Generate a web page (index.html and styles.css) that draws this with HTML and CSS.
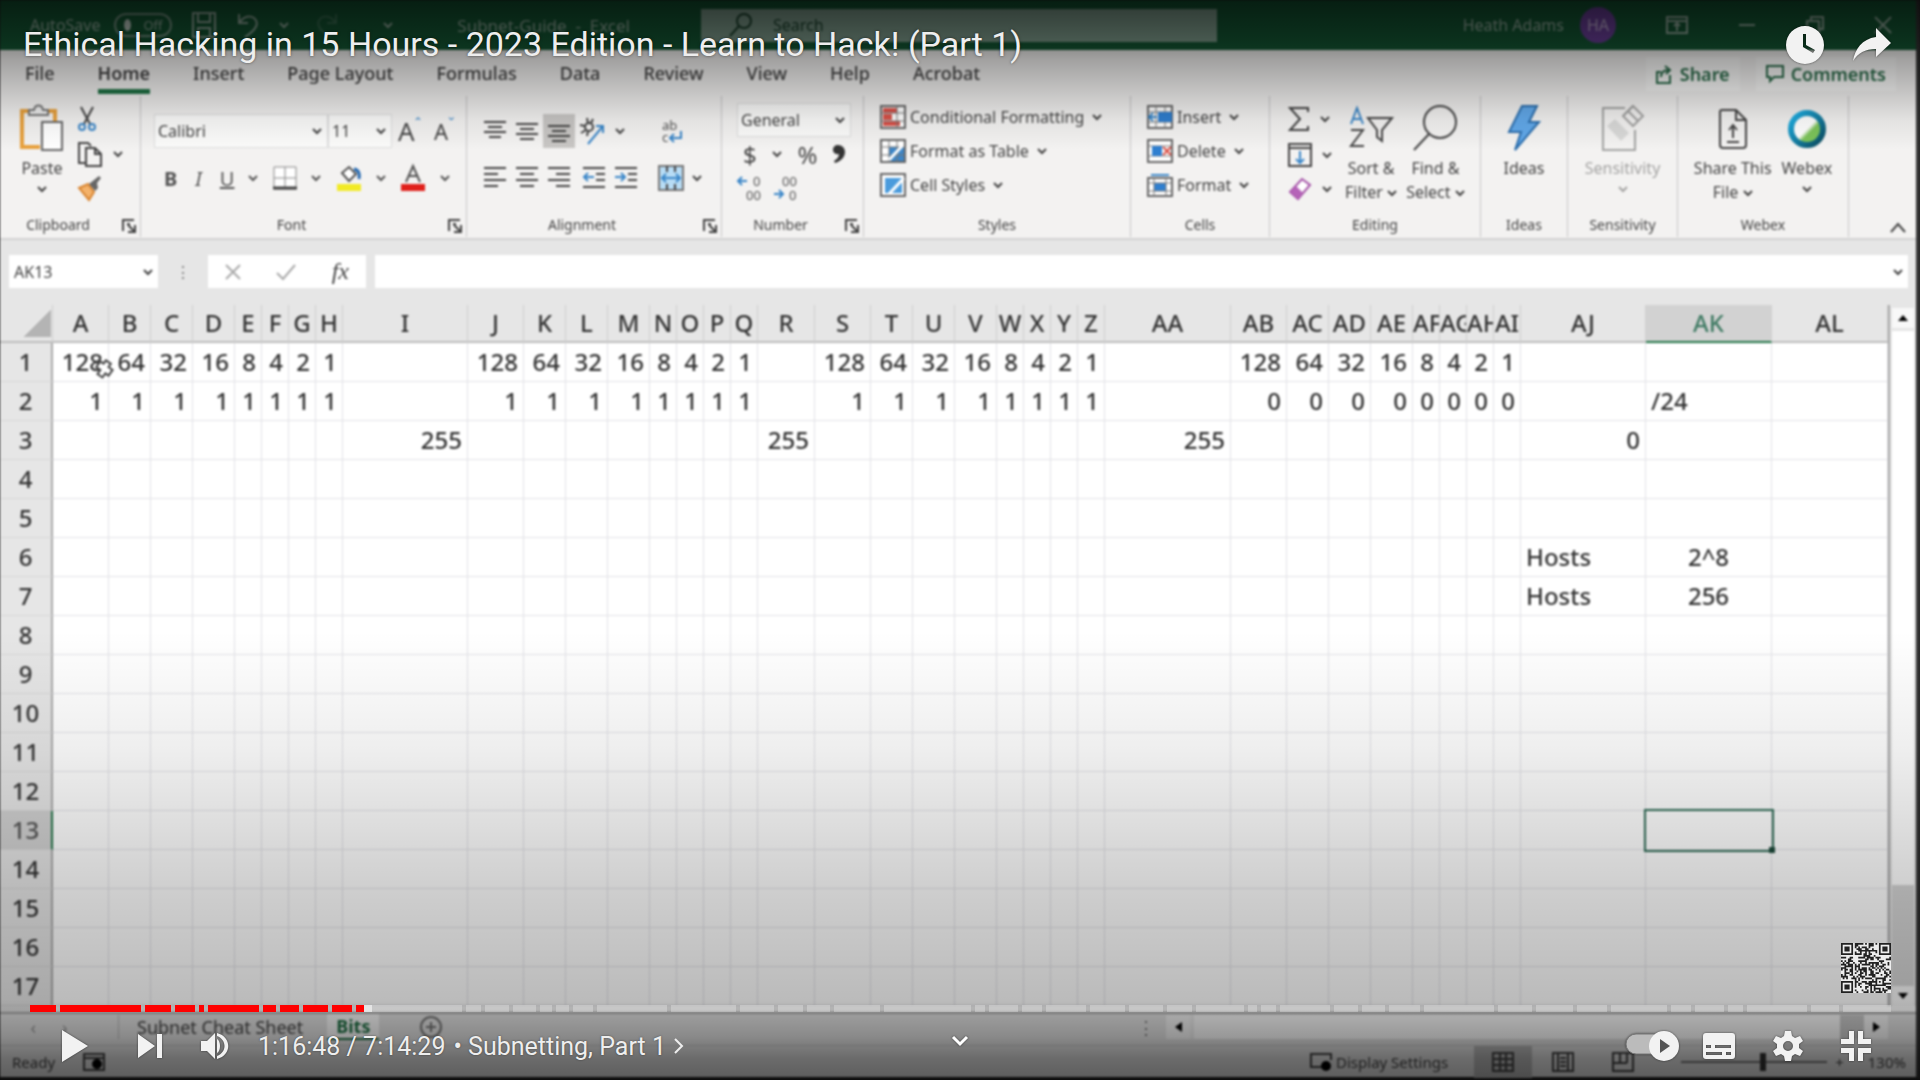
FILE: index.html
```html
<!DOCTYPE html>
<html lang="en">
<head>
<meta charset="utf-8">
<title>Ethical Hacking in 15 Hours - 2023 Edition - Learn to Hack! (Part 1)</title>
<link rel="stylesheet" href="styles.css">
</head>
<body>
<svg class="defs" aria-hidden="true">
  <symbol id="caret" viewBox="0 0 10 10"><path d="M1 3L5 7L9 3" fill="none" stroke="currentColor" stroke-width="2"/></symbol>
  <symbol id="launch" viewBox="0 0 14 14"><path d="M1 12V1H12M5 5H8M6 6L12 12M13 6V13H6" fill="none" stroke="currentColor" stroke-width="2"/></symbol>
</svg>
<main class="player">
  <div class="screen">
    <header class="titlebar">
      <div class="tb-left">
        <span>AutoSave</span><span class="switch"><i></i>Off</span>
        <svg width="26" height="28" viewBox="0 0 26 28"><path d="M2 2H24V26H2ZM7 2V11H19V2M7 26V17H19V26" class="ln"/></svg>
        <svg width="24" height="26" viewBox="0 0 24 26"><path d="M3 2V11H12M3 11C8 4 14 3 18 6C24 11 20 18 9 25" class="ln"/></svg>
        <svg class="c" ><use href="#caret"/></svg>
        <svg class="faint" width="24" height="26" viewBox="0 0 24 26"><path d="M21 2V11H12M21 11C16 4 10 3 6 6C0 11 4 18 15 25" class="ln"/></svg>
        <svg class="c last"><use href="#caret"/></svg>
        <span class="doc">Subnet-Guide&nbsp; -&nbsp; Excel</span>
      </div>
      <label class="search"><svg width="24" height="26" viewBox="0 0 24 26"><circle cx="15" cy="9" r="7" class="ln"/><path d="M10 14L1 24" class="ln"/></svg><input aria-label="Search" placeholder="Search"></label>
      <div class="tb-right">
        <span>Heath Adams</span><b class="avatar">HA</b>
        <svg width="22" height="18" viewBox="0 0 22 18"><path d="M1 1H21V17H1ZM1 5H21M11 15V8M8 10L11 7L14 10" class="ln"/></svg>
        <svg width="18" height="18" viewBox="0 0 18 18"><path d="M1 9H17" class="ln"/></svg>
        <svg width="18" height="18" viewBox="0 0 18 18"><path d="M1 5H13V17H1ZM5 5V1H17V13H13" class="ln"/></svg>
        <svg width="18" height="18" viewBox="0 0 18 18"><path d="M1 1L17 17M17 1L1 17" class="ln"/></svg>
      </div>
    </header>
    <nav class="tabs">
      <a href="#">File</a><a href="#" class="on">Home</a><a href="#">Insert</a><a href="#">Page Layout</a><a href="#">Formulas</a><a href="#">Data</a><a href="#">Review</a><a href="#">View</a><a href="#">Help</a><a href="#">Acrobat</a>
      <span class="tab-actions">
        <button><svg width="17" height="20" viewBox="0 0 17 20"><path d="M5 8H1V19H14V11M5 13C5 8 8 6 13 6M9 2L14 6L10 10" class="ln"/></svg>Share</button>
        <button><svg width="18" height="18" viewBox="0 0 18 18"><path d="M1 1H17V12H8L4 16V12H1Z" class="ln"/></svg>Comments</button>
      </span>
    </nav>
    <section class="ribbon">
      <div class="group">
        <div class="body clip">
          <button class="big"><svg width="44" height="48" viewBox="0 0 44 48"><path d="M20 43H2V7H35V18" fill="none" stroke="#e8a13d" stroke-width="4"/><path d="M9 11V6H14C15 0 22 0 23 6H28V11Z" fill="#eee" stroke="#777" stroke-width="2"/><path d="M22 18H42V46H22Z" fill="#fff" stroke="#666" stroke-width="2"/></svg><span>Paste</span><svg class="c"><use href="#caret"/></svg></button>
          <div class="stack">
            <button><svg width="20" height="26" viewBox="0 0 20 26"><path d="M4 1L13 18M16 1L7 18" class="ln"/><circle cx="5" cy="21" r="3" class="bl"/><circle cx="15" cy="21" r="3" class="bl"/></svg></button>
            <button><svg width="26" height="26" viewBox="0 0 26 26"><path d="M9 22H2V2H11L14 5M9 7H18L24 13V25H9ZM18 7V13H24" class="ln"/></svg><svg class="c"><use href="#caret"/></svg></button>
            <button><svg width="26" height="26" viewBox="0 0 26 26"><path d="M2 13L11 9L17 17L12 25Z" fill="#f3b26b" stroke="#d98530" stroke-width="2"/><path d="M12 9L18 16L21 13L20 8L24 3L22 1L17 5Z" fill="#666"/></svg></button>
          </div>
        </div>
        <footer class="has-l">Clipboard<svg class="l"><use href="#launch"/></svg></footer>
      </div>
      <div class="group">
        <div class="body rows font">
          <div class="row"><button class="combo name">Calibri<svg class="c"><use href="#caret"/></svg></button><button class="combo size">11<svg class="c"><use href="#caret"/></svg></button><button class="glyph a1">A<sup>ˆ</sup></button><button class="glyph a2">A<sup>ˇ</sup></button></div>
          <div class="row biu"><button><b>B</b></button><button><i>I</i></button><button><u>U</u></button><svg class="c"><use href="#caret"/></svg>
            <button class="gap"><svg width="24" height="24" viewBox="0 0 24 24"><path d="M1 1H23V23H1ZM12 1V23M1 12H23" fill="#fff" stroke="#888"/><path d="M0 22H24" stroke="#444" stroke-width="3"/></svg></button><svg class="c"><use href="#caret"/></svg>
            <button class="gap"><svg width="26" height="28" viewBox="0 0 26 28"><path d="M6 9L13 3L20 10L13 17Z" fill="#fff" stroke="#555" stroke-width="2"/><path d="M18 5C23 6 24 10 23 15" fill="none" stroke="#2468b0" stroke-width="3"/><path d="M1 20H25V27H1Z" fill="#f2ea25"/></svg></button><svg class="c"><use href="#caret"/></svg>
            <button><svg width="26" height="28" viewBox="0 0 26 28"><path d="M6 18L13 2L20 18M9 12H17" class="ln"/><path d="M1 20H25V27H1Z" fill="#e0201b"/></svg></button><svg class="c"><use href="#caret"/></svg></div>
        </div>
        <footer class="has-l">Font<svg class="l"><use href="#launch"/></svg></footer>
      </div>
      <div class="group">
        <div class="body rows align">
          <div class="row"><button><svg width="24" height="24" viewBox="0 0 24 24"><path d="M1 3H23M5 8H19M1 13H23M6 18H18" class="ln"/></svg></button><button><svg width="24" height="24" viewBox="0 0 24 24"><path d="M1 5H23M5 10H19M1 15H23M5 20H19" class="ln"/></svg></button><button class="sel"><svg width="24" height="24" viewBox="0 0 24 24"><path d="M1 7H23M5 12H19M1 17H23M5 22H19" class="ln"/></svg></button><button><svg width="28" height="28" viewBox="0 0 28 28"><circle cx="10" cy="10" r="4" class="ln"/><path d="M1 8L6 9M8 1L9 6M14 2L12 6M2 16L7 13M9 14L8 19" class="ln"/><path d="M9 27L24 9M17 9H24V16" class="bl"/></svg></button><svg class="c"><use href="#caret"/></svg><button class="wrap"><svg width="22" height="26" viewBox="0 0 22 26"><text x="1" y="12">ab</text><text x="1" y="24">c</text><path d="M20 13V20H10M13 16L9 20L13 24" class="bl"/></svg></button></div>
          <div class="row"><button><svg width="24" height="24" viewBox="0 0 24 24"><path d="M1 2H23M1 8H15M1 14H23M1 20H15" class="ln"/></svg></button><button><svg width="24" height="24" viewBox="0 0 24 24"><path d="M1 2H23M5 8H19M1 14H23M5 20H19" class="ln"/></svg></button><button><svg width="24" height="24" viewBox="0 0 24 24"><path d="M1 2H23M9 8H23M1 14H23M9 20H23" class="ln"/></svg></button><button class="indent"><svg width="24" height="24" viewBox="0 0 24 24"><path d="M1 2H23M14 8H23M14 14H23M1 21H23" class="ln"/><path d="M12 11H2M6 7L2 11L6 15" class="bl"/></svg></button><button><svg width="24" height="24" viewBox="0 0 24 24"><path d="M1 2H23M14 8H23M14 14H23M1 21H23" class="ln"/><path d="M1 11H11M7 7L11 11L7 15" class="bl"/></svg></button><button class="merge"><svg width="26" height="26" viewBox="0 0 26 26"><path d="M1 1H25V25H1Z" fill="#b7dcf5" stroke="#777" stroke-width="2"/><path d="M5 13H21M8 9L4 13L8 17M18 9L22 13L18 17" class="bl"/><path d="M9 1V7M17 1V7M9 19V25M17 19V25" class="ln"/></svg></button><svg class="c"><use href="#caret"/></svg></div>
        </div>
        <footer class="has-l">Alignment<svg class="l"><use href="#launch"/></svg></footer>
      </div>
      <div class="group">
        <div class="body num">
          <button class="combo">General<svg class="c"><use href="#caret"/></svg></button>
          <div class="row"><button>$</button><svg class="c"><use href="#caret"/></svg><button>%</button><button aria-label="Comma style"><svg width="12" height="18" viewBox="0 0 12 18"><path d="M5 0C9 0 12 3 12 7C12 12 8 16 2 18L1 16C4 14 6 12 6 9C2 10 0 7 0 5C0 2 2 0 5 0Z" fill="#333"/></svg></button></div>
          <div class="row"><svg width="26" height="26" viewBox="0 0 26 26"><path d="M10 6H2M5 2L1 6L5 10" class="bl"/><text x="16" y="11">0</text><text x="9" y="25">00</text></svg><svg width="26" height="26" viewBox="0 0 26 26"><text x="9" y="11">00</text><path d="M1 19H9M6 15L10 19L6 23" class="bl"/><text x="16" y="25">0</text></svg></div>
        </div>
        <footer class="has-l">Number<svg class="l"><use href="#launch"/></svg></footer>
      </div>
      <div class="group">
        <div class="body list">
          <button><svg width="26" height="24" viewBox="0 0 26 24"><path d="M1 1H25V23H1Z" fill="#fff" stroke="#666" stroke-width="2"/><path d="M3 3H17V8H3ZM3 9H12V15H3ZM3 16H20V21H3Z" fill="#d9534a"/><path d="M17 1V23M1 8H25M1 16H25" stroke="#777"/></svg>Conditional Formatting<svg class="c"><use href="#caret"/></svg></button>
          <button><svg width="26" height="24" viewBox="0 0 26 24"><path d="M1 1H25V23H1Z" fill="#fff" stroke="#666" stroke-width="2"/><path d="M9 8H24V22H9Z" fill="#3d85c6"/><path d="M9 1V23M17 1V23M1 8H25M1 16H25" stroke="#777"/><path d="M9 21L23 6" stroke="#fff" stroke-width="3"/></svg>Format as Table<svg class="c"><use href="#caret"/></svg></button>
          <button><svg width="26" height="24" viewBox="0 0 26 24"><path d="M1 1H25V23H1Z" fill="#fff" stroke="#666" stroke-width="2"/><path d="M5 5H22V20H5Z" fill="#4a9bdc"/><path d="M9 21L24 5" stroke="#fff" stroke-width="3"/></svg>Cell Styles<svg class="c"><use href="#caret"/></svg></button>
        </div>
        <footer>Styles</footer>
      </div>
      <div class="group">
        <div class="body list cells">
          <button><svg width="26" height="24" viewBox="0 0 26 24"><path d="M1 1H25V23H1Z" fill="#fff" stroke="#666" stroke-width="2"/><path d="M1 7H25M1 17H25M9 1V23M18 1V23" stroke="#777"/><path d="M11 7H25V17H11Z" fill="#2f7fd0"/><path d="M10 12H3M6 8L2 12L6 16" class="bl"/></svg>Insert<svg class="c"><use href="#caret"/></svg></button>
          <button><svg width="26" height="24" viewBox="0 0 26 24"><path d="M1 1H25V23H1Z" fill="#fff" stroke="#666" stroke-width="2"/><path d="M1 7H25M1 17H25" stroke="#777"/><path d="M5 7H15V17H5Z" fill="#2f7fd0"/><path d="M16 8L24 16M24 8L16 16" stroke="#d9534a" stroke-width="2"/></svg>Delete<svg class="c"><use href="#caret"/></svg></button>
          <button><svg width="26" height="24" viewBox="0 0 26 24"><path d="M1 5H25V23H1Z" fill="#fff" stroke="#666" stroke-width="2"/><path d="M4 2H22" class="bl"/><path d="M7 10H19V18H7Z" fill="#2f7fd0"/><path d="M1 10H25M1 18H25M7 5V23M19 5V23" stroke="#777"/></svg>Format<svg class="c"><use href="#caret"/></svg></button>
        </div>
        <footer>Cells</footer>
      </div>
      <div class="group">
        <div class="body edit">
          <div class="stack">
            <button><svg width="22" height="26" viewBox="0 0 22 26"><path d="M20 6V2H2L12 13L2 24H20V20" class="ln"/></svg><svg class="c"><use href="#caret"/></svg></button>
            <button><svg width="24" height="24" viewBox="0 0 24 24"><path d="M1 1H23V23H1ZM1 5H23" class="ln"/><path d="M12 8V20M8 16L12 20L16 16" class="bl"/></svg><svg class="c"><use href="#caret"/></svg></button>
            <button><svg width="24" height="24" viewBox="0 0 24 24"><path d="M2 15L14 2L22 8L10 22Z" fill="#fff" stroke="#a553a8" stroke-width="2"/><path d="M2 15L8 9L15 16L10 22Z" fill="#b563b8"/></svg><svg class="c"><use href="#caret"/></svg></button>
          </div>
          <button class="big"><svg width="46" height="48" viewBox="0 0 46 48"><path d="M3 20L9 4L15 20M5 15H13" class="bl"/><path d="M3 26H15L3 42H16M20 14H44L34 26V37L29 33V26Z" class="ln"/></svg><span>Sort &amp;<br>Filter <svg class="c"><use href="#caret"/></svg></span></button>
          <button class="big"><svg width="46" height="48" viewBox="0 0 46 48"><circle cx="28" cy="18" r="16" class="ln"/><path d="M17 30L2 46" class="ln"/></svg><span>Find &amp;<br>Select <svg class="c"><use href="#caret"/></svg></span></button>
        </div>
        <footer>Editing</footer>
      </div>
      <div class="group">
        <div class="body mid"><button class="big"><svg width="34" height="48" viewBox="0 0 34 48"><path d="M15 2H30L22 18H32L8 46L14 28H2Z" fill="#62a9ea" stroke="#2c6fae" stroke-width="2"/></svg><span>Ideas</span></button></div>
        <footer>Ideas</footer>
      </div>
      <div class="group">
        <div class="body mid off"><button class="big" disabled><svg width="44" height="48" viewBox="0 0 44 48"><path d="M24 4H2V46H34V26" class="ln"/><path d="M6 22L14 15L28 29L20 37Z" fill="#bbb"/><path d="M22 12L32 2L42 12L32 22Z" class="ln"/><path d="M27 7L37 17M32 2L22 12" class="ln"/></svg><span>Sensitivity</span><svg class="c"><use href="#caret"/></svg></button></div>
        <footer>Sensitivity</footer>
      </div>
      <div class="group">
        <div class="body mid"><button class="big"><svg width="30" height="48" viewBox="0 0 30 48"><path d="M4 6H18L28 16V41Q28 44 25 44H5Q2 44 2 41V8Q2 6 4 6ZM18 6V16H28M15 34V22M11 26L15 21L19 26M9 38H21" class="ln"/></svg><span>Share This<br>File <svg class="c"><use href="#caret"/></svg></span></button>
        <button class="big"><svg width="40" height="48" viewBox="0 0 40 48"><defs><linearGradient id="wx" x1="0" y1="0" x2="1" y2="1"><stop offset="0" stop-color="#1fb6ee"/><stop offset="1" stop-color="#0b4a5c"/></linearGradient><linearGradient id="wi" x1="0" y1="0" x2="1" y2="1"><stop offset=".5" stop-color="#fff"/><stop offset=".6" stop-color="#7cc35a"/></linearGradient></defs><circle cx="20" cy="25" r="16" fill="url(#wi)" stroke="url(#wx)" stroke-width="6"/></svg><span>Webex</span><svg class="c"><use href="#caret"/></svg></button></div>
        <footer>Webex</footer>
      </div>
      <div class="group end"><button aria-label="Collapse ribbon"><svg width="16" height="12" viewBox="0 0 16 12"><path d="M1 11L8 3L15 11" class="ln"/></svg></button></div>
    </section>
    <section class="formula">
      <button class="namebox">AK13<svg class="c"><use href="#caret"/></svg></button>
      <span class="dots">⋮</span>
      <div class="fx"><svg width="16" height="18" viewBox="0 0 16 18"><path d="M1 2L15 16M15 2L1 16" stroke="#aaa" stroke-width="2"/></svg><svg width="20" height="18" viewBox="0 0 20 18"><path d="M1 10L7 16L19 2" fill="none" stroke="#aaa" stroke-width="2"/></svg><i>fx</i></div>
      <div class="fin"><input aria-label="Formula bar"><svg class="c"><use href="#caret"/></svg></div>
    </section>
    <section class="sheet">
      <table id="grid"></table>
      <div class="vscroll"><button aria-label="Scroll up"><svg width="10" height="6"><path d="M0 6L5 0L10 6Z"/></svg></button><i class="thumb"></i><i class="track"></i><button aria-label="Scroll down"><svg width="10" height="6"><path d="M0 0L5 6L10 0Z"/></svg></button></div>
    </section>
    <section class="sheetbar">
      <span class="nav"><span>‹</span><span>›</span></span>
      <a href="#">Subnet Cheat Sheet</a><a href="#" class="on">Bits</a>
      <button class="plus" aria-label="New sheet"><svg width="24" height="24" viewBox="0 0 24 24"><circle cx="12" cy="12" r="10" class="ln"/><path d="M12 7V17M7 12H17" class="ln"/></svg></button>
      <span class="dots">⋮</span>
      <div class="hscroll"><button aria-label="Scroll left"><svg width="7" height="10"><path d="M7 0L0 5L7 10Z"/></svg></button><i class="thumb"></i><i class="track"></i><button aria-label="Scroll right"><svg width="7" height="10"><path d="M0 0L7 5L0 10Z"/></svg></button></div>
    </section>
    <footer class="status">
      <span>Ready</span><svg class="rec" width="24" height="20" viewBox="0 0 24 20"><path d="M2 2H22V18H2ZM2 6H22" class="ln"/><circle cx="15" cy="12" r="5"/></svg>
      <span class="disp"><svg width="24" height="20" viewBox="0 0 24 20"><path d="M13 15H2V2H22V8" class="ln"/><circle cx="17" cy="14" r="5"/></svg>Display Settings</span>
      <button class="view on" aria-label="Normal"><svg width="22" height="20" viewBox="0 0 22 20"><path d="M1 1H21V19H1ZM8 1V19M14 1V19M1 7H21M1 13H21" class="ln"/></svg></button>
      <button class="view" aria-label="Page layout"><svg width="22" height="20" viewBox="0 0 22 20"><path d="M1 1H21V19H1ZM6 1V19M16 1V19M8 6H14M8 10H14M8 14H14" class="ln"/></svg></button>
      <button class="view" aria-label="Page break"><svg width="22" height="20" viewBox="0 0 22 20"><path d="M1 1H21V19H1ZM8 1V11M15 1V11M1 11H15" class="ln"/></svg></button>
      <span class="zoom"><i></i></span><span class="pl">+</span><span>130%</span>
    </footer>
    <svg class="pointer" width="22" height="22" viewBox="0 0 22 22" aria-hidden="true"><path d="M7 2H13V6H18V13H14V18H8V13H3V6H7Z" transform="rotate(35 11 11)" fill="#fff" stroke="#444" stroke-width="2"/></svg>
  </div>

  <div class="overlay">
    <div class="top">
      <h1>Ethical Hacking in 15 Hours - 2023 Edition - Learn to Hack! (Part 1)</h1>
      <button aria-label="Watch later"><svg width="40" height="40" viewBox="0 0 40 40"><path fill-rule="evenodd" d="M20 1A19 19 0 1 1 20 39A19 19 0 1 1 20 1ZM18 9V22L28 28L30 25L21 20V9Z"/></svg></button>
      <button aria-label="Share"><svg width="40" height="36" viewBox="0 0 40 36"><path d="M24 1L39 16L24 30V22C13 22 6 26 1 34C3 22 10 12 24 10Z"/></svg></button>
    </div>
    <div class="bottom">
      <svg class="qr" id="qr" viewBox="0 0 29 29" role="img" aria-label="QR code"></svg>
      <div class="progress" id="progress"></div>
      <div class="controls">
        <button aria-label="Play"><svg width="28" height="34" viewBox="0 0 28 34"><path d="M1 1L27 17L1 33Z"/></svg></button>
        <button class="next" aria-label="Next"><svg width="26" height="26" viewBox="0 0 26 26"><path d="M1 1L18 13L1 25ZM20 1H25V25H20Z"/></svg></button>
        <button class="vol" aria-label="Mute"><svg width="30" height="28" viewBox="0 0 30 28"><path d="M1 9H7L15 1V27L7 19H1ZM17 7C21 9 21 19 17 21ZM17 1C32 5 32 23 17 27V24C27 20 27 8 17 4Z"/></svg></button>
        <span class="time">1:16:48 / 7:14:29</span><a class="chapter" href="#">• Subnetting, Part 1</a>
        <svg class="chev" width="10" height="16" viewBox="0 0 10 16"><path d="M1 1L8 8L1 15" fill="none" stroke="#eee" stroke-width="2"/></svg>
        <button class="more" aria-label="More"><svg width="16" height="12" viewBox="0 0 16 12"><path d="M1 2L8 9L15 2" fill="none" stroke="#fff" stroke-width="3"/></svg></button>
        <div class="right">
          <button aria-label="Autoplay"><svg width="56" height="32" viewBox="0 0 56 32"><rect x="2" y="4" width="44" height="20" rx="10" fill="#bbb" stroke="#777"/><circle cx="40" cy="16" r="15"/><path d="M36 9L46 16L36 23Z" fill="#555" stroke="none"/></svg></button>
          <button aria-label="Subtitles"><svg width="34" height="28" viewBox="0 0 34 28"><path fill-rule="evenodd" d="M4 1H30Q33 1 33 4V24Q33 27 30 27H4Q1 27 1 24V4Q1 1 4 1ZM4 13V16H9V13ZM13 13V16H29V13ZM4 20V23H20V20ZM24 20V23H29V20Z"/></svg></button>
          <button aria-label="Settings"><svg width="32" height="32" viewBox="0 0 32 32"><path fill-rule="evenodd" d="M13 1H19L20 6L23 8L28 6L31 11L27 14V18L31 21L28 26L23 24L20 26L19 31H13L12 26L9 24L4 26L1 21L5 18V14L1 11L4 6L9 8L12 6ZM16 11A5 5 0 1 0 16 21A5 5 0 1 0 16 11Z"/></svg></button>
          <button aria-label="Exit full screen"><svg width="32" height="32" viewBox="0 0 32 32"><path d="M9 1H14V14H1V9H9ZM18 1H23V9H31V14H18ZM1 18H14V31H9V23H1ZM18 18H31V23H23V31H18Z"/></svg></button>
        </div>
      </div>
    </div>
  </div>
</main>
<script src="script.js"></script>
</body>
</html>
```
FILE: styles.css
```css
* { box-sizing: border-box; }
body { margin: 0; background: #222; overflow-x: hidden; font-family: "Noto Sans", "Open Sans", sans-serif; color: #444; }
button { font: inherit; color: inherit; background: none; border: 0; padding: 0; display: flex; align-items: center; }
a { color: inherit; text-decoration: none; }
input { font: inherit; border: 0; background: none; padding: 0; outline: 0; min-width: 0; }
svg { flex: none; overflow: visible; }
.defs { position: absolute; width: 0; height: 0; }
.c { width: 10px; height: 10px; }
.l { width: 14px; height: 14px; }
.ln { fill: none; stroke: currentColor; stroke-width: 2; }
.bl { fill: none; stroke: #3a86c8; stroke-width: 2; }

.player { position: relative; min-height: 100vh; overflow: hidden; }
.screen { filter: blur(1px); border-right: 4px solid #333; border-bottom: 3px solid #222; background: #e6e6e6; font-size: 16px; }

.titlebar { display: grid; grid-template-columns: 701fr 516fr 699fr; height: 50px; background: #145a35; color: #9bb5a6; align-items: center; }
.tb-left, .tb-right { display: flex; align-items: center; white-space: nowrap; }
.tb-left { padding: 0 71px 0 30px; gap: 14px; }
.tb-left > svg { margin-left: 5px; }
.switch { display: flex; align-items: center; gap: 12px; width: 58px; height: 24px; padding: 0 8px; border: 2px solid #7d9c8b; border-radius: 12px; font-size: 13px; }
.switch i { width: 12px; height: 12px; border-radius: 50%; background: #c5d5cc; }
.tb-left .faint { opacity: .3; margin-left: 12px; }
.tb-left .last { margin-left: 30px; }
.doc { margin-left: auto; font-size: 17px; }
.search { display: flex; align-items: center; gap: 20px; height: 33px; padding: 0 28px; background: #85a594; color: #1d4630; }
.search input { flex: 1; }
.search input::placeholder { color: #1d4630; opacity: 1; }
.tb-right { justify-content: flex-end; gap: 50px; padding-right: 24px; }
.avatar { width: 36px; height: 36px; border-radius: 50%; background: #6f42a0; color: #c9b6dd; display: grid; place-items: center; font-weight: 400; margin-left: -34px; }

.tabs { display: flex; align-items: center; gap: 43px; height: 46px; padding: 0 20px 0 25px; background: #f3f2f1; font-size: 18px; font-weight: 500; }
.tabs a { line-height: 32px; border-bottom: 5px solid transparent; margin-top: 5px; }
.tabs .on { font-weight: 600; border-color: #217346; }
.tab-actions { display: flex; gap: 16px; margin-left: auto; padding-top: 2px; }
.tab-actions button { height: 34px; padding: 0 10px; gap: 7px; background: #fff8; color: #2a6b49; font-weight: 600; }

.ribbon { display: grid; grid-template-columns: 141fr 326fr 255fr 142fr 267fr 139fr 211fr 87fr 110fr 171fr 67fr; height: 144px; background: #f3f2f1; border-bottom: 2px solid #d2d2d2; }
.group { display: flex; flex-direction: column; min-width: 0; border-right: 1px solid #c8c8c8; margin-bottom: 1px; }
.group.end { border: 0; justify-content: flex-end; align-items: flex-end; padding: 0 10px 4px; }
.group footer { display: flex; justify-content: center; position: relative; height: 22px; line-height: 20px; font-size: 14px; }
.group footer.has-l { padding-right: 24px; }
.group footer .l { position: absolute; right: 4px; top: 4px; }
.body { display: flex; flex: 1; min-height: 0; white-space: nowrap; }
.big { flex-direction: column; line-height: 24px; font-size: 16px; text-align: center; align-self: flex-start; gap: 4px; padding-top: 8px; }
.big span { display: block; }
.stack { display: flex; flex-direction: column; justify-content: space-between; padding: 10px 0 14px; }
.stack button { gap: 10px; min-height: 24px; }
.clip { padding-left: 20px; gap: 13px; }
.rows { flex-direction: column; padding-top: 18px; gap: 13px; }
.row { display: flex; align-items: center; height: 34px; }
.font { padding-left: 13px; }
.combo { justify-content: space-between; height: 34px; padding: 0 5px 0 3px; background: #fffa; border: 1px solid #ddd; }
.name { width: 174px; } .size { width: 64px; }
.glyph { font-size: 26px; width: 30px; margin-left: 6px; align-items: flex-start; line-height: 30px; }
.glyph.a2 { font-size: 22px; }
.glyph sup { font-size: 16px; line-height: 16px; color: #3a86c8; }
.biu { padding-left: 10px; gap: 18px; font-size: 20px; color: #555; }
.biu .c { margin-left: -4px; margin-right: -4px; }
.biu .gap { margin-left: 1px; }
.align { padding-left: 16px; }
.align .row { gap: 8px; }
.sel { height: 34px; padding: 0 4px; margin: 0 -4px; background: #c8c6c4; }
.wrap { margin-left: 28px; } .merge { margin-left: 12px; } .indent { margin-left: 3px; }
.align text, .num text { font-size: 13px; fill: #555; }
.num { flex-direction: column; padding: 7px 12px 0 15px; }
.num .row { padding: 0 6px; gap: 10px; font-size: 24px; justify-content: space-between; }
.num .row:last-child { justify-content: flex-start; padding: 0; }
.list { flex-direction: column; padding: 4px 0 0 16px; }
.list button { height: 34px; gap: 4px; }
.list .c { margin-left: 4px; }
.edit { padding-left: 18px; gap: 9px; }
.edit .stack { width: 48px; }
.mid { justify-content: center; gap: 10px; }
.off { opacity: .45; }

.formula { display: flex; align-items: center; height: 65px; padding: 0 8px 2px 9px; }
.namebox { width: 149px; height: 33px; padding: 0 5px; justify-content: space-between; background: #fff; }
.dots { width: 50px; text-align: center; color: #777; }
.fx { display: flex; align-items: center; justify-content: space-between; width: 158px; height: 33px; padding: 0 17px; background: #fff; font-family: "Liberation Serif", serif; font-size: 24px; }
.fin { flex: 1; display: flex; align-items: center; margin-left: 9px; height: 33px; padding-right: 5px; background: #fff; }
.fin input { flex: 1; }

.sheet { display: flex; padding-bottom: 6px; background: linear-gradient(90deg, #e6e6e6 53px, #fff 53px); }
#grid { flex: 1; width: 100%; min-width: 0; table-layout: fixed; border-collapse: separate; border-spacing: 0; font-size: 24px; font-weight: 500; color: #333; }
#grid th { padding: 0; font-weight: 500; background: #e6e6e6; border-right: 1px solid #cfcfcf; white-space: nowrap; overflow: hidden; line-height: 30px; }
#grid thead th { height: 38px; border-bottom: 2px solid #bdbdbd; }
#grid thead th:first-child { background: linear-gradient(135deg, transparent 50%, #b4b4b4 50%) 24px 4px / 27px 28px no-repeat #e6e6e6; }
#grid tbody th { height: 39px; border-right: 2px solid #aaa; border-bottom: 1px solid #d8d8d8; }
#grid td { padding: 0 5px; text-align: right; background: #fff; border-right: 1px solid #e2e2e6; border-bottom: 1px solid #e2e2e6; white-space: nowrap; line-height: 30px; }
#grid thead th.picked { background: #d2d2d2; color: #3f7a63; border-bottom-color: #217346; }
#grid tbody th.picked { background: #d2d2d2; color: #555; border-right-color: #217346; }
#grid td.l-al { text-align: left; } #grid td.c-al { text-align: center; }
#grid td.active { box-shadow: 0 0 0 2px #2c6a54; position: relative; }
#grid td.active::after { content: ""; position: absolute; right: -4px; bottom: -4px; width: 6px; height: 6px; background: #1d4a3a; }
.w-head { width: 53px; } .w-s { width: 27px; } .w-m { width: 42px; } .w-l { width: 56px; } .w-r { width: 57px; } .w-i { width: 125px; } .w-x { width: 126px; } .w-aj { width: 125px; } .w-al { width: 116px; }
.pointer { position: absolute; left: 93px; top: 359px; }
.vscroll { width: 28px; display: flex; flex-direction: column; padding: 3px 2px 0; border-left: 2px solid #aaa; background: #e6e6e6; }
.vscroll button, .hscroll button { background: #f8f8f8; justify-content: center; }
.vscroll button { height: 20px; }
.vscroll .thumb { flex: 558; margin-top: 3px; background: #fff; }
.vscroll .track { flex: 102; background: #d4d4d4; }

.sheetbar { display: flex; align-items: center; height: 33px; padding: 0 28px 5px 0; border-top: 2px solid #aaa; line-height: 24px; font-size: 18px; }
.nav { display: flex; justify-content: center; gap: 26px; width: 119px; padding-right: 20px; border-right: 1px solid #bbb; color: #999; }
.sheetbar a { padding: 0 24px 0 18px; }
.sheetbar .on { padding: 0 9px; background: #fff; color: #217346; font-weight: 700; border-bottom: 2px solid #217346; }
.plus { margin-left: 40px; color: #777; }
.sheetbar .dots { margin-left: auto; width: 40px; }
.hscroll { display: flex; flex: 0 1 722px; height: 24px; background: #f0f0f0; }
.hscroll button { width: 24px; }
.hscroll .thumb { flex: 648; margin-left: 4px; background: #fff; }
.hscroll .track { flex: 24; background: #ccc; }

.status { display: flex; align-items: center; height: 32px; padding: 0 10px 0 12px; font-size: 15px; border-top: 1px solid #ccc; }
.rec { margin-left: 27px; }
.disp { display: flex; align-items: center; gap: 3px; margin-left: auto; margin-right: 26px; }
.view { justify-content: center; width: 58px; height: 32px; margin-right: 2px; }
.view.on { background: #bbb; }
.zoom { width: 146px; height: 2px; background: #777; margin-left: 27px; }
.zoom i { display: block; width: 6px; height: 18px; margin: -8px 0 0 79px; background: #333; }
.pl { margin: 0 24px 0 8px; }

.overlay { position: absolute; inset: 0; display: flex; flex-direction: column; justify-content: space-between; color: #eee; font-family: Roboto, sans-serif;
  background: linear-gradient(#000a 0, #0007 40px, #0005 60px, #0003 90px, #0001 120px, #0000 150px), linear-gradient(0deg, #0009 0, #0008 22px, #0006 44px, #0004 80px, #0003 180px, #0001 330px, #0000 450px); }
.overlay button { color: #f2f2f2; filter: drop-shadow(0 0 1px #0008); }
.overlay button path, .overlay button circle { fill: currentColor; }
.overlay .more path { fill: none; }
.overlay button path[stroke="none"] { fill: #555; }
.top { display: flex; align-items: flex-start; padding: 22px 28px 0 23px; }
.top h1 { margin: 0; flex: 1; font-weight: 400; font-size: 34px; line-height: 44px; text-shadow: 0 0 3px #0008; }
.top button { height: 46px; margin-left: 27px; }
.qr { display: block; width: 50px; height: 50px; margin: 0 29px 12px auto; background: #eee; }
.progress { display: flex; gap: 4px; height: 7px; margin: 0 29px 0 30px; }
.seg { background: #fff4; flex-basis: 0; min-width: 0; }
.seg.done { background: #f00; }
.controls { position: relative; display: flex; align-items: center; height: 68px; padding: 0 48px 0 61px; font-size: 25px; white-space: nowrap; text-shadow: 0 0 2px #0008; }
.next { margin-left: 48px; } .vol { margin-left: 37px; } .time { margin-left: 28px; } .chapter { margin-left: 8px; } .chev { margin-left: 8px; }
.more { position: absolute; left: 50%; top: 23px; margin-left: -8px; }
.right { display: flex; align-items: center; gap: 36px; margin-left: auto; }
.right button:first-child { margin-right: -14px; }
```
FILE: script.js
```js
// Spreadsheet grid: four octets of eight bit columns, with a total column after each.
const octet = ["w-l", "w-m", "w-m", "w-m", "w-s", "w-s", "w-s", "w-s"];
const widths = ["w-head", ...octet, "w-i", ...octet, "w-r", ...octet, "w-x", ...octet, "w-aj", "w-x", "w-al"];
const letter = n => (n >= 26 ? "A" : "") + String.fromCharCode(65 + n % 26);
const names = widths.slice(1).map((_, i) => letter(i));
const data = {};
[0, 9, 18, 27].forEach((start, k) => {
  for (let b = 0; b < 8; b++) {
    data[names[start + b] + 1] = 128 >> b;
    data[names[start + b] + 2] = k < 3 ? 1 : 0;
  }
  data[names[start + 8] + 3] = k < 3 ? 255 : 0;
});
Object.assign(data, { AK2: "/24", AJ6: "Hosts", AJ7: "Hosts", AK6: "2^8", AK7: "256" });
const cls = { AK2: "l-al", AJ6: "l-al", AJ7: "l-al", AK6: "c-al", AK7: "c-al", AK13: "active" };
let html = "<colgroup>" + widths.map(w => `<col class="${w}">`).join("") + "</colgroup><thead><tr><th></th>";
html += names.map(n => `<th scope="col"${n === "AK" ? ' class="picked"' : ""}>${n}</th>`).join("") + "</tr></thead><tbody>";
for (let r = 1; r <= 17; r++) {
  html += `<tr><th scope="row"${r === 13 ? ' class="picked"' : ""}>${r}</th>`;
  html += names.map(n => `<td class="${cls[n + r] || ""}">${data[n + r] ?? ""}</td>`).join("") + "</tr>";
}
document.getElementById("grid").innerHTML = html + "</tbody>";

// Chapter start positions along the progress bar; the last entry is the end.
const marks = [30, 60, 145, 175, 199, 208, 263, 280, 303, 332, 356, 466, 485, 513, 540, 556, 573, 597, 671, 740, 778, 807, 834, 884, 975, 989, 1022, 1046, 1090, 1129, 1167, 1196, 1248, 1261, 1280, 1334, 1362, 1389, 1424, 1498, 1536, 1577, 1611, 1671, 1695, 1728, 1747, 1811, 1843, 1895];
document.getElementById("progress").innerHTML = marks.slice(0, -1).map((m, i) => {
  const w = marks[i + 1] - m - 4;
  const bg = i === 10 ? ";background:linear-gradient(90deg,#f00 8%,#fffa 8% 15%,#fff4 15%)" : "";
  return `<i class="seg${i < 10 ? " done" : ""}" style="flex-grow:${w}${bg}"></i>`;
}).join("");

// QR code modules with three finder squares.
let seed = 77, d = "";
const rnd = () => (seed = (seed * 1103515245 + 12345) % 2147483648) / 2147483648;
const finder = (x, y) => x >= 0 && y >= 0 && x < 7 && y < 7 ? (x % 6 === 0 || y % 6 === 0 || (x > 1 && x < 5 && y > 1 && y < 5) ? 1 : 0) : (x >= -1 && y >= -1 && x < 8 && y < 8 ? 0 : -1);
for (let y = 0; y < 29; y++) for (let x = 0; x < 29; x++) {
  const f = Math.max(finder(x, y), finder(x - 22, y), finder(x, y - 22));
  const a = Math.abs(x - 22), b = Math.abs(y - 22), m = Math.max(a, b);
  const on = m <= 2 ? m !== 1 : f >= 0 ? f : rnd() > 0.48;
  if (on) d += `M${x} ${y}h1v1h-1z`;
}
document.getElementById("qr").innerHTML = `<path fill="#222" d="${d}"/>`;
```
